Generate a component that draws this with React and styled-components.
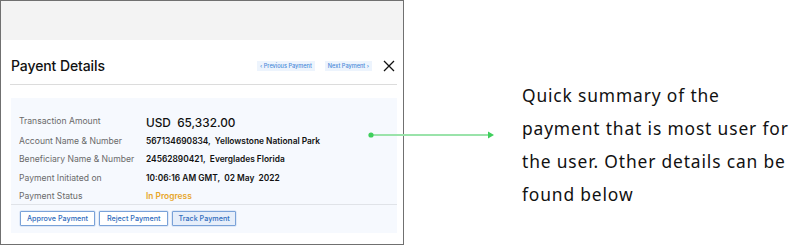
import React from 'react';
import styled, { createGlobalStyle } from 'styled-components';

const Global = createGlobalStyle`
  html, body { margin: 0; padding: 0; background: #fff; }
  body { font-family: "Inter", "Liberation Sans", sans-serif; }
`;

const Page = styled.div`
  position: relative;
  width: 811px;
  height: 245px;
  display: flex;
  align-items: flex-start;
`;

const Frame = styled.div`
  width: 404px;
  height: 245px;
  box-sizing: border-box;
  border: 1.5px solid #707070;
  display: flex;
  flex-direction: column;
  flex-shrink: 0;
`;

const TopBar = styled.div`
  height: 39px;
  background: #f3f3f3;
`;

const Modal = styled.div`
  flex: 1;
  padding: 0 6px 0 9px;
  display: flex;
  flex-direction: column;
`;

const Header = styled.div`
  height: 45px;
  box-sizing: border-box;
  border-bottom: 1.5px solid #dcdcdc;
  display: flex;
  align-items: flex-end;
  padding: 0 1px 10px 1px;
`;

const Title = styled.h2`
  margin: 0;
  flex: 1;
  font-size: 14px;
  font-weight: 500;
  color: #111;
  letter-spacing: -0.1px;
  line-height: 17px;
`;

const NavLink = styled.span`
  font-size: 5.6px;
  font-weight: 500;
  color: #4a8ad8;
  background: #edf4fd;
  padding: 2px 3px;
  margin-right: ${p => p.$gap || 0}px;
  margin-bottom: 3px;
  white-space: nowrap;
`;

const Close = styled.svg`
  width: 12px;
  height: 12px;
  margin-left: 11px;
  margin-right: 1px;
  margin-bottom: 2px;
`;

const Panel = styled.div`
  margin-top: 13px;
  margin-left: 1px;
  height: 135px;
  background: #f6f9fe;
  display: flex;
  flex-direction: column;
`;

const Rows = styled.div`
  padding: 12px 8px 0 8px;
  display: grid;
  grid-template-columns: 127px 1fr;
  border-bottom: 1.5px solid #e0e3e8;
`;

const Label = styled.div`
  font-size: 8.6px;
  color: #6a6a6a;
  height: ${p => p.$h}px;
  display: flex;
  align-items: center;
`;

const Value = styled.div`
  font-size: ${p => (p.$big ? 11.8 : 8.4)}px;
  font-weight: ${p => (p.$big ? 500 : 600)};
  color: ${p => p.$color || '#111'};
  height: ${p => p.$h}px;
  display: flex;
  align-items: center;
  white-space: pre;
  padding-top: ${p => (p.$big ? 4 : 0)}px;
  box-sizing: border-box;
`;

const Actions = styled.div`
  display: flex;
  gap: 4px;
  padding: 6px 8px 0 9px;
`;

const Button = styled.button`
  font-family: inherit;
  font-size: 7.2px;
  font-weight: 500;
  color: #2f6cbd;
  background: ${p => (p.$active ? '#e6eefa' : '#fff')};
  border: 1px solid #7aa2d8;
  border-radius: 1px;
  height: 15px;
  padding: 0 ${p => p.$px || 6}px;
  box-shadow: 0 0 0 0.5px #c9d9ef;
`;

const Note = styled.p`
  margin: 0;
  margin-left: 118px;
  margin-top: 79px;
  white-space: nowrap;
  font-family: "Noto Sans", "Open Sans", sans-serif;
  font-size: 17.4px;
  letter-spacing: 0.85px;
  line-height: 33px;
  color: #111;
`;

const Arrow = styled.svg`
  position: absolute;
  left: 365px;
  top: 128px;
`;

const rows = [
  ['Transaction Amount', 'USD  65,332.00', 21, { $big: true }],
  ['Account Name & Number', '567134690834,  Yellowstone National Park', 19],
  ['Beneficiary Name & Number', '24562890421,  Everglades Florida', 18],
  ['Payment Initiated on', '10:06:16 AM GMT,  02 May  2022', 19],
  ['Payment Status', 'In Progress', 17, { $color: '#e8a62a' }],
];

export default function App() {
  return (
    <Page>
      <Global />
      <Frame>
        <TopBar />
        <Modal>
          <Header>
            <Title>Payent Details</Title>
            <NavLink $gap={10}>‹ Previous Payment</NavLink>
            <NavLink>Next Payment ›</NavLink>
            <Close viewBox="0 0 12 12">
              <path d="M1 1 L11 11 M11 1 L1 11" stroke="#111" strokeWidth="1.3" fill="none" />
            </Close>
          </Header>
          <Panel>
            <Rows>
              {rows.map(([label, value, h, extra]) => (
                <React.Fragment key={label}>
                  <Label $h={h}>{label}</Label>
                  <Value $h={h} {...(extra || {})}>{value}</Value>
                </React.Fragment>
              ))}
            </Rows>
            <Actions>
              <Button>Approve Payment</Button>
              <Button $px={7}>Reject Payment</Button>
              <Button $px={5} $active>Track Payment</Button>
            </Actions>
          </Panel>
        </Modal>
      </Frame>
      <Note>
        Quick summary of the<br />
        payment that is most user for<br />
        the user. Other details can be<br />
        found below
      </Note>
      <Arrow width="132" height="14" viewBox="0 0 132 14">
        <line x1="6" y1="7" x2="124" y2="7" stroke="#9ae3aa" strokeWidth="2" />
        <circle cx="6" cy="7" r="2.6" fill="#3fcf5c" />
        <path d="M123 3.5 L129 7 L123 10.5 Z" fill="#3fcf5c" />
      </Arrow>
    </Page>
  );
}
